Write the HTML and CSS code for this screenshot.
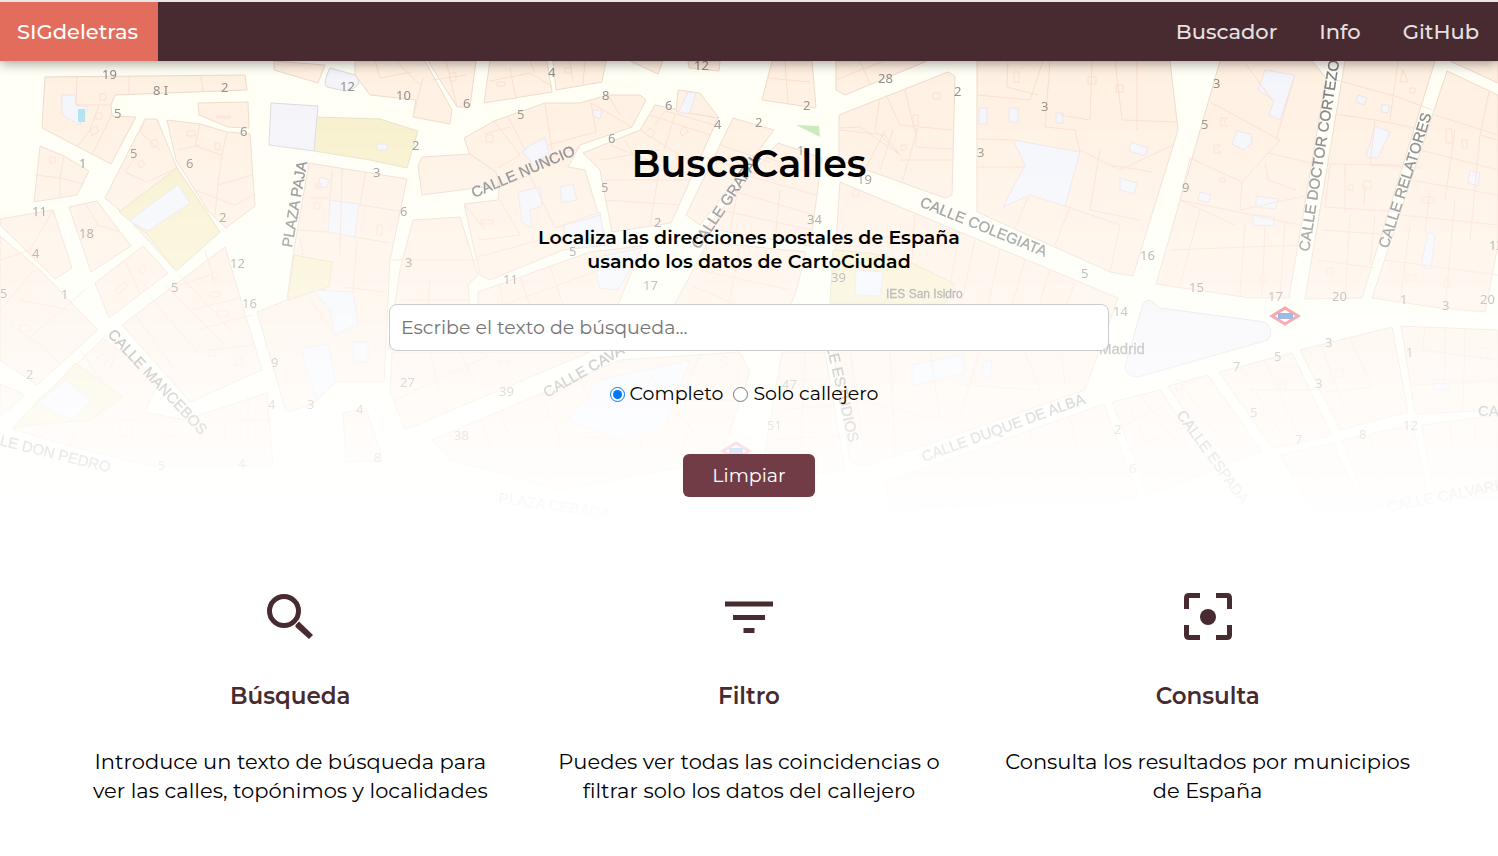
FILE: index.html
```html
<!DOCTYPE html>
<html lang="es">
<head>
<meta charset="utf-8">
<meta name="viewport" content="width=device-width, initial-scale=1">
<title>BuscaCalles</title>
<link rel="stylesheet" href="styles.css">
</head>
<body>
<header class="navbar">
  <a class="brand" href="#">SIGdeletras</a>
  <nav class="menu">
    <a href="#buscador">Buscador</a>
    <a href="#info">Info</a>
    <a href="#github">GitHub</a>
  </nav>
</header>
<main>
  <section class="hero" id="buscador">
    <svg class="map" viewBox="0 61 1498 472" preserveAspectRatio="xMidYMin slice" aria-hidden="true">
      <rect class="road" x="0" y="61" width="1498" height="480"/>
      <g class="block">
        <path d="M45 77L245 75L247 90L115 95L111 105L112 116L136 117L111 164L42 128Z"/>
        <path d="M198 103L248 102L249 128L228 127L199 115Z"/>
        <path d="M167 120L200 124L227 132L250 134L255 206L226 228L208 211L176 160Z"/>
        <path d="M145 119L157 119L177 168L220 232L176 271L127 217L105 198Z"/>
        <path d="M40 146L64 156L89 171L77 195L34 202Z"/>
        <path d="M69 207L97 201L131 246L91 272Z"/>
        <path d="M0 219L53 210L72 268L55 279L0 225Z"/>
        <path d="M143 246L168 273L109 318L95 283Z"/>
        <path d="M225 247L262 370L190 402L122 325Z"/>
        <path d="M0 236L40 270L98 330L37 385L0 360Z"/>
        <path d="M0 384L25 395L0 417Z"/>
        <path d="M103 338L160 380L145 412L185 420L267 393L273 466L150 466L70 446L12 429Z"/>
        <path d="M309 163L407 179L390 260L384 382L336 382L312 405L286 412L257 312L287 300L293 255Z"/>
        <path d="M343 413L366 408L380 450L382 461L346 462Z"/>
        <path d="M274 61L325 65L318 83L274 70Z"/>
        <path d="M355 61L425 61L452 110L450 124L413 117L416 100L370 95L355 75Z"/>
        <path d="M428 61L476 61L470 107L457 107Z"/>
        <path d="M490 61L547 61L552 92L484 103Z"/>
        <path d="M553 61L606 61L602 82L556 90Z"/>
        <path d="M464 138L494 121L545 103L580 103L608 95L640 95L646 100L632 127L580 145L568 167L585 170L600 220L608 245L563 250L490 280L480 275L464 204L498 200L500 180L470 155Z"/>
        <path d="M422 157L470 154L496 172L499 185L422 195L418 166Z"/>
        <path d="M413 220L460 217L478 275L468 285L473 350L388 350L400 270Z"/>
        <path d="M583 153L640 130L655 105L718 118L671 223L612 232L600 170Z"/>
        <path d="M630 61L663 61L658 74ZM678 90L700 93L719 118L676 111Z"/>
        <path d="M688 61L720 61L719 71L689 68Z"/>
        <path d="M733 118L774 130L755 155L700 225L686 215Z"/>
        <path d="M778 143L822 158L810 246L706 228Z"/>
        <path d="M478 292L590 252L642 246L618 305L560 350L478 350Z"/>
        <path d="M708 242L806 252L796 292L772 350L650 350Z"/>
        <path d="M772 61L812 61L816 108L762 100Z"/>
        <path d="M836 61L927 61L845 95L836 90Z"/>
        <path d="M839 115L948 72L955 76L952 195L945 198L839 160Z"/>
        <path d="M840 182L960 232L1118 298L1085 390L865 466L850 462L830 330Z"/>
        <path d="M977 61L1170 61L1178 130L1133 276L1110 272L977 212Z"/>
        <path d="M1220 61L1312 61L1326 78L1289 298L1250 298L1156 284Z"/>
        <path d="M1345 61L1435 61L1362 298L1305 299Z"/>
        <path d="M1447 71L1498 95L1498 245L1485 312L1440 308L1372 298Z"/>
        <path d="M1450 61L1498 61L1498 83Z"/>
        <path d="M1300 350L1392 327L1408 412L1340 430Z"/>
        <path d="M1401 326L1498 330L1498 410L1415 414Z"/>
        <path d="M1219 372L1292 353L1332 435L1272 448Z"/>
        <path d="M1168 386L1208 375L1262 452L1222 466Z"/>
        <path d="M1112 402L1160 390L1215 470L1148 495Z"/>
        <path d="M1280 455L1333 443L1365 510L1310 510Z"/>
        <path d="M1342 440L1412 425L1430 500L1368 510Z"/>
        <path d="M1422 425L1498 415L1498 500L1435 500Z"/>
        <path d="M885 482L1104 404L1140 500L890 510Z"/>
        <path d="M782 352L825 352L845 470L760 480Z"/>
        <path d="M392 352L590 352L405 430L390 392Z"/>
        <path d="M432 440L620 360L740 352L750 372L720 460L560 490L450 460Z"/>
      </g>
      <g class="park">
        <path d="M315 117L380 119L418 131L407 168L370 160L314 151Z"/>
        <path d="M177 168L220 232L176 271L147 234L119 212Z"/>
        <path d="M294 255L332 262L329 287L288 300Z"/>
        <path d="M75 363L123 397L90 420L30 425L12 429L35 403L60 380Z"/>
        <path d="M833 250L870 253L910 262L955 284L945 303L830 303Z"/>
      </g>
      <g class="plaza">
        <path d="M271 103L318 106L314 151L269 145Z"/>
        <path d="M330 68L355 75Q366 86 345 91L327 87Q322 84 330 68Z"/>
        <path d="M1150 300L1160 308L1265 322Q1275 330 1268 340L1138 377Q1124 376 1125 366L1143 304Q1146 299 1150 300Z"/>
      </g>
      <g class="yard">
        <path d="M62 95L76 95L76 105L88 107L80 125L62 115Z"/>
        <path d="M178 184L190 203L148 231L129 221Z"/>
        <path d="M330 200L359 204L355 237L328 232Z"/>
        <path d="M313 290L353 292L358 324L335 335L330 310Z"/>
        <path d="M301 348L328 344L336 382L316 400Z"/>
        <path d="M353 342L368 342L368 362L353 362Z"/>
        <path d="M65 380L92 400L72 420L38 403Z"/>
        <path d="M532 144L545 138L549 152L535 166L522 152Z"/>
        <path d="M518 192L540 187L542 206L530 210L532 228L522 222Z"/>
        <path d="M560 187L573 184L577 200L562 203Z"/>
        <path d="M563 225L600 212L605 244L570 249Z"/>
        <path d="M593 110L602 110L600 119L593 116Z"/>
        <path d="M688 92L696 93L690 113L678 113Z"/>
        <path d="M592 258L642 248L618 290L600 288Z"/>
        <path d="M320 177L330 180L326 188L318 186Z"/>
        <path d="M377 144L387 144L387 150L377 150Z"/>
        <path d="M856 270L883 272L880 296L855 295Z"/>
        <path d="M1013 140L1080 152L1065 206L1030 195L1003 207L1025 165Z"/>
        <path d="M979 108L987 108L987 124L979 124ZM1009 108L1018 108L1018 122L1009 122ZM1056 113L1063 113L1063 123L1056 123Z"/>
        <path d="M1265 70L1295 75L1280 120L1269 115L1274 100L1258 90Z"/>
        <path d="M1237 131L1251 134L1252 144L1243 150L1232 144Z"/>
        <path d="M1256 196L1278 199L1276 209L1256 207ZM1253 215L1274 217L1274 226L1253 225Z"/>
        <path d="M1375 126L1390 132L1378 158L1366 157ZM1131 142L1148 148L1145 156L1129 151ZM1120 178L1137 183L1134 194L1120 190Z"/>
        <path d="M1200 192L1211 195L1208 203L1198 200ZM1358 95L1367 98L1364 105L1356 102ZM1382 104L1390 106L1388 113L1381 112ZM1470 170L1480 173L1478 186L1468 183Z"/>
        <path d="M1428 232L1435 235L1431 269L1421 266ZM1434 380L1449 380L1449 390L1434 390Z"/>
        <path d="M568 420L600 380L690 360L665 425L620 440Z"/>
        <path d="M912 365L963 354L964 374L912 386ZM983 362L992 360L990 378L982 378Z"/>
      </g>
      <rect class="pool" x="78" y="109" width="7" height="13"/>
      <path class="lawn" d="M796 125L819 126L820 137Z"/>
      <path class="parcel" d="M77 77L76 105L110 105M129 77L129 94M201 76L203 91M99 105L90 130L77 147M111 116L92 155M136 117L120 145M64 156L60 178L35 175M60 178L60 198M60 178L84 184M145 119L140 132L160 150M134 158L125 172L147 182L177 168M200 124L195 146L222 155L227 132M222 155L218 185L253 175M178 150L200 145M195 190L235 205L255 194M218 185L215 215M85 203L98 225L80 240M98 225L120 232M0 260L30 250L53 210M20 300L70 310M0 310L34 270M30 337L85 290M10 325L40 345L62 365M126 263L140 295M135 315L175 370M150 297L200 355M165 285L225 345M180 275L235 335M190 310L240 298M200 329L252 315M207 350L255 345M180 285L210 275M205 250L215 285M120 335L110 370M80 350L103 382M70 446L75 430L110 405M200 420L200 466M225 420L225 466M248 395L248 466M237 420L270 420M332 172L330 198L309 198M366 171L360 205L406 212M328 232L297 230M355 237L390 243M300 237L303 255M342 168L340 255M357 240L353 292M383 292L345 287M310 300L335 335M375 61L380 78L412 72M396 61L420 85M413 117L423 78M432 80L466 75M446 61L457 107M510 68L516 100M490 81L530 73L552 86M530 61L535 73M570 61L573 82M585 61L583 84M494 121L520 155L498 168M484 134L510 127M508 117L525 150M545 103L552 150M548 145L596 132L591 103M591 103L632 127M608 95L620 115M530 175L555 228L600 215M535 162L580 148M498 188L530 175M500 200L520 235L479 240M464 204L485 230M478 257L540 240M390 260L478 260M402 300L470 300M430 278L425 350M610 145L660 165L650 225M600 160L660 150M605 180L690 180M604 200L680 205M640 130L695 165M650 115L710 135M655 125L665 111L715 125M625 140L635 158M675 115L664 150M700 155L775 180M720 145L770 162M760 155L815 175M745 175L816 195M730 190L814 215M720 210L812 230M740 180L730 230M780 190L775 240M700 270L790 290M740 246L720 350M690 285L785 325M500 285L510 350M520 277L545 350M550 267L575 340M490 310L600 270M768 78L810 82M785 61L788 103M836 80L860 70L885 61M860 61L870 84M840 130L885 135L900 155L875 130L880 98M886 95L900 125L952 130M905 90L915 132M916 128L916 147L952 149M840 128L860 127L900 155M893 130L880 170M918 128L902 182M862 175L885 131M952 160L900 160M977 95L1030 100L1043 61M1008 61L1007 87L1038 95M977 139L1013 140M977 167L1025 167M1050 61L1045 127L1075 130L1080 152M1092 61L1090 120M1115 61L1122 120L1177 122M1137 61L1137 130M1090 120L1060 115M1080 150L1120 170L1173 145M1065 206L1120 225M1028 197L1015 228M1100 150L1090 210L1140 220M1110 165L1152 172M1120 225L1110 272M1070 207L1055 245M840 240L960 232M915 215L912 260M960 232L950 285M975 240L960 310M1000 250L985 320M1025 260L1005 330M1050 270L1030 335M1075 282L1050 350M945 305L1112 315M850 350L865 460M890 350L895 455M930 350L940 420L860 400M980 350L960 415M1020 340L1040 390L960 385M1060 330L1065 385M1210 102L1280 140L1242 182L1190 158M1245 63L1272 100M1276 140L1295 75M1242 182L1240 210L1309 195M1190 158L1180 200L1300 225M1180 200L1235 225M1268 153L1320 165M1265 162L1268 180L1296 190M1245 225L1240 295M1265 226L1262 298M1285 222L1280 298M1200 210L1180 285M1170 250L1300 245M1336 80L1398 97L1432 110M1335 114L1375 120L1425 130M1398 61L1390 120M1375 120L1370 165L1420 168M1328 164L1410 165M1330 164L1325 207L1400 212M1345 164L1345 212M1365 185L1364 205M1322 230L1395 235M1350 215L1345 298M1375 215L1370 265M1318 260L1375 268M1489 92L1480 135L1498 140M1435 115L1498 135M1420 150L1498 170M1410 180L1498 195M1400 215L1498 225M1385 260L1498 275M1455 130L1445 200M1480 135L1470 240M1455 200L1445 308M1410 225L1400 302M1430 190L1425 232M1321 345L1345 410M1350 338L1372 387L1325 392M1240 367L1285 440M1265 361L1300 440M1245 390L1320 390M1425 328L1422 350L1498 360M1445 328L1445 385M1465 330L1463 412M1415 385L1498 380M1180 382L1235 462M1125 400L1170 490M1140 395L1200 475M1115 430L1165 405M1125 450L1190 425M910 475L920 510M950 460L960 510M990 446L1000 510M1030 431L1045 510M1070 417L1090 505M1300 450L1335 510M1370 435L1385 505M1450 422L1455 500M1475 420L1475 500M790 380L830 380M780 410L835 405M770 440L840 435M805 352L800 470M430 352L440 395M460 352L475 385M395 400L490 355M500 412L515 450M540 395L560 435L620 440M580 380L590 400M650 375L700 440M700 355L680 400L740 400M480 420L500 470M560 435L550 488M640 440L645 475M690 420L680 465"/>
      <path class="parcel" d="M100 94h6v6h-6zM96 113h6v6h-6zM90 130l6-4 3 5-7 5zM50 157h5v6h-5zM137 163l5-3 3 5-5 3zM150 142l6-3 3 6-6 3zM187 131h8v5h-8zM215 143h5v7h-5zM217 116h13v2h-13zM314 203h6v6h-6zM316 183h5v5h-5zM450 73h6v8h-6zM497 82h8v4h-8zM565 68h6v5h-6zM645 133l5-5 5 5-5 5zM680 131l5-4 3 5-6 4zM486 135h7v7h-7zM481 220h12v4h-12zM377 225h5v10h-5zM933 93h7v6h-7zM913 115h5v10h-5zM901 145h5v5h-5zM853 190h6v6h-6zM860 238h5v5h-5zM1014 72h5v10h-5zM1088 77h8v7h-8zM1116 85h7v7h-7zM1221 118h7l-4 4 4 4h-7zM1214 145h7l-4 4 4 4h-7zM1403 70l5 12h-8zM1410 88h5v5h-5zM1446 129h6v14h-6zM1462 140h5v8h-5zM1220 178h5v4h-5zM1363 181h8v8h-8zM1348 185h5v5h-5zM1422 197h12v6h-12zM1327 268h6v6h-6zM1406 275h10v6h-10zM1444 280h6v7h-6zM1260 276h6v7h-6zM1176 380h6v10h-6zM1280 381h6v8h-6zM1335 369h8v8h-8zM1480 348h8v10h-8zM115 290l10-8 3 4-10 8zM138 270l5-5 4 4-5 5zM20 325h10v6h-10zM97 358l6-4 6 6-6 4zM120 420h12v16h-12zM163 436h12v12h-12zM210 292h10v5h-10zM218 311h10v5h-10zM212 272h6v6h-6zM235 358h7v7h-7zM208 350h8v6h-8zM460 340h8v8h-8zM500 358h8v5h-8zM720 360l5-4 5 5-5 4z"/>
      <g class="street">
        <text transform="translate(292 248) rotate(-80)">PLAZA PAJA</text>
        <text transform="translate(474 198) rotate(-23)">CALLE NUNCIO</text>
        <text transform="translate(699 250) rotate(-56)">CALLE GRAFAL</text>
        <text transform="translate(919 206) rotate(22)">CALLE COLEGIATA</text>
        <text transform="translate(1309 252) rotate(-81)">CALLE DOCTOR CORTEZO</text>
        <text transform="translate(1388 249) rotate(-72)">CALLE RELATORES</text>
        <text transform="translate(107 335) rotate(47)">CALLE MANCEBOS</text>
        <text transform="translate(-9 443) rotate(14)">LLE DON PEDRO</text>
        <text transform="translate(547 398) rotate(-30)">CALLE CAVA BAJA</text>
        <text transform="translate(820 318) rotate(77)">CALLE ESTUDIOS</text>
        <text transform="translate(924 462) rotate(-20)">CALLE DUQUE DE ALBA</text>
        <text transform="translate(1176 415) rotate(54)">CALLE ESPADA</text>
        <text transform="translate(1388 512) rotate(-11)">CALLE CALVARIO</text>
        <text transform="translate(498 503) rotate(8)">PLAZA CEBADA</text>
        <text x="1478" y="416">CA</text>
        <text class="place" x="886" y="298">IES San Isidro</text>
        <text x="1099" y="354">Madrid</text>
      </g>
      <g class="number">
        <text x="102" y="79">19</text><text x="153" y="95">8 I</text><text x="221" y="92">2</text><text x="114" y="118">5</text><text x="240" y="136">6</text><text x="130" y="158">5</text><text x="79" y="168">1</text><text x="186" y="168">6</text><text x="219" y="222">2</text><text x="32" y="216">11</text><text x="79" y="238">18</text><text x="32" y="258">4</text><text x="340" y="91">12</text><text x="396" y="100">10</text><text x="463" y="108">6</text><text x="548" y="77">4</text><text x="517" y="119">5</text><text x="602" y="100">8</text><text x="694" y="70">12</text><text x="665" y="110">6</text><text x="714" y="129">4</text><text x="412" y="150">2</text><text x="373" y="177">3</text><text x="608" y="143">6</text><text x="601" y="192">5</text><text x="400" y="216">6</text><text x="654" y="227">2</text><text x="405" y="267">3</text><text x="569" y="256">5</text><text x="503" y="284">11</text><text x="643" y="290">17</text><text x="878" y="83">28</text><text x="803" y="110">2</text><text x="755" y="127">2</text><text x="954" y="96">2</text><text x="797" y="155">1</text><text x="857" y="184">19</text><text x="807" y="224">34</text><text x="831" y="282">39</text><text x="1041" y="111">3</text><text x="977" y="157">3</text><text x="1081" y="278">5</text><text x="1213" y="88">3</text><text x="1201" y="129">5</text><text x="1182" y="192">9</text><text x="1140" y="260">16</text><text x="1489" y="250">12</text><text x="230" y="268">12</text><text x="242" y="308">16</text><text x="171" y="292">5</text><text x="61" y="299">1</text><text x="0" y="298">5</text><text x="26" y="379">2</text><text x="271" y="367">9</text><text x="268" y="409">4</text><text x="307" y="409">3</text><text x="356" y="414">4</text><text x="158" y="470">5</text><text x="238" y="468">4</text><text x="374" y="462">8</text><text x="400" y="387">27</text><text x="499" y="396">39</text><text x="454" y="440">38</text><text x="782" y="389">47</text><text x="767" y="430">51</text><text x="1113" y="316">14</text><text x="1189" y="292">15</text><text x="1268" y="301">17</text><text x="1332" y="301">20</text><text x="1400" y="304">1</text><text x="1442" y="310">3</text><text x="1480" y="304">20</text><text x="1325" y="347">3</text><text x="1274" y="361">5</text><text x="1233" y="371">7</text><text x="1406" y="357">1</text><text x="1315" y="388">3</text><text x="1250" y="417">5</text><text x="1114" y="434">2</text><text x="1295" y="444">7</text><text x="1359" y="439">8</text><text x="1403" y="430">12</text><text x="1129" y="473">6</text>
      </g>
      <g class="metro">
        <path d="M1272 316L1285 308L1298 316L1285 324Z"/><rect x="1278" y="313" width="15" height="6"/>
        <path d="M723 451L736 443L749 451L736 459Z"/><rect x="729" y="448" width="14" height="6"/>
      </g>
    </svg>
    <form class="search">
      <h1>BuscaCalles</h1>
      <h2>Localiza las direcciones postales de España<br>usando los datos de CartoCiudad</h2>
      <input class="query" type="text" aria-label="Texto de búsqueda" placeholder="Escribe el texto de búsqueda...">
      <div class="options">
        <label><input type="radio" name="tipo" checked>Completo</label>
        <label><input type="radio" name="tipo">Solo callejero</label>
      </div>
      <button class="clear" type="button">Limpiar</button>
    </form>
  </section>
  <section class="features" id="info">
    <article>
      <svg class="icon" viewBox="0 0 56 56" aria-hidden="true"><circle cx="22" cy="22" r="14.500" fill="none" stroke="currentColor" stroke-width="5"/><path d="M33.500 36L37 32.500L51 46L47 50L33.500 38Z"/></svg>
      <h3>Búsqueda</h3>
      <p>Introduce un texto de búsqueda para<br>ver las calles, topónimos y localidades</p>
    </article>
    <article>
      <svg class="icon" viewBox="0 0 56 56" aria-hidden="true"><path d="M4 12.500h48v5H4zM12 26h32v5H12zM22.500 39h11v5h-11z"/></svg>
      <h3>Filtro</h3>
      <p>Puedes ver todas las coincidencias o<br>filtrar solo los datos del callejero</p>
    </article>
    <article>
      <svg class="icon" viewBox="0 0 56 56" aria-hidden="true"><path d="M4 20V9Q4 4 9 4H20V9H9V20ZM36 4H47Q52 4 52 9V20H47V9H36ZM52 36V46Q52 51 47 51H36V46H47V36ZM20 51H9Q4 51 4 46V36H9V46H20Z"/><circle cx="28" cy="28" r="8"/></svg>
      <h3>Consulta</h3>
      <p>Consulta los resultados por municipios<br>de España</p>
    </article>
  </section>
</main>
</body>
</html>
```
FILE: styles.css
```css
* {
  box-sizing: border-box;
}

body {
  margin: 0;
  border-top: 2px solid #e8e6e8;
  background: #fff;
  color: #000;
  font-family: Montserrat, Inter, "Open Sans", sans-serif;
  font-size: 19px;
}

.navbar {
  position: relative;
  z-index: 1;
  display: flex;
  justify-content: space-between;
  background: #472b30;
  box-shadow: 0 2px 12px rgba(0, 0, 0, 0.4);
  font-size: 21px;
  font-weight: 500;
  line-height: 59px;
}

.navbar a {
  color: #e6e0e0;
  text-decoration: none;
}

.navbar .brand {
  padding: 0 20px 0 17px;
  background: #e26d5c;
  color: #fff;
}

.menu {
  display: flex;
  gap: 42px;
  padding-right: 19px;
}

.hero {
  position: relative;
  display: flex;
  justify-content: center;
  padding: 80px 20px 36px;
}

.map {
  position: absolute;
  inset: 0;
  width: 100%;
  height: 100%;
  mask-image: linear-gradient(#000, transparent 98%);
}

.road {
  fill: #fffff5;
}

.block {
  fill: #fff0e1;
  stroke: #ecd8c8;
}

.park {
  fill: #f7efc8;
  stroke: #e6dfbc;
}

.plaza {
  fill: #f3f3f9;
  stroke: #d8d6da;
}

.yard {
  fill: #f3f5fb;
  stroke: #ece2e4;
}

.pool {
  fill: #a9dff2;
}

.lawn {
  fill: #c3e8b2;
}

.parcel {
  fill: none;
  stroke: #fbdccd;
}

.street {
  fill: #77777b;
  stroke: #77777b;
  stroke-width: 0.3px;
  font: 15px "Liberation Sans", sans-serif;
}

.street .place {
  font-size: 12px;
}

.number {
  fill: #8d8984;
  font: 13px "Noto Sans", sans-serif;
}

.metro path {
  fill: #fff;
  stroke: #ee4050;
  stroke-width: 3px;
}

.metro rect {
  fill: #2868c0;
}

.search {
  position: relative;
  display: flex;
  flex-direction: column;
  align-items: center;
  width: 100%;
  max-width: 720px;
}

h1,
h2,
h3,
p {
  margin: 0;
  text-align: center;
}

h1 {
  margin-bottom: 40px;
  font-size: 38px;
  font-weight: 600;
  line-height: 45px;
}

h2 {
  margin-bottom: 30px;
  font-size: 19px;
  font-weight: 600;
  line-height: 24px;
}

.query {
  width: 100%;
  height: 47px;
  padding: 0 11px;
  border: 1px solid #ccc;
  border-radius: 8px;
  background: #fff;
  font: inherit;
}

.query::placeholder {
  color: #757575;
}

.options {
  display: flex;
  gap: 10px;
  margin: 31px 10px 48px 0;
  line-height: 24px;
}

.options label {
  display: flex;
  align-items: center;
  gap: 5px;
}

.options input {
  width: 15px;
  height: 15px;
  margin: 0;
}

.clear {
  width: 132px;
  height: 43px;
  border: 0;
  border-radius: 6px;
  background: #723c47;
  color: #fff;
  font: inherit;
}

.features {
  display: grid;
  grid-template-columns: repeat(3, 1fr);
  padding: 56px 61px 50px;
  font-size: 21px;
  line-height: 29px;
}

.features article {
  display: flex;
  flex-direction: column;
  align-items: center;
}

.icon {
  width: 56px;
  height: 56px;
  margin-bottom: 37px;
  color: #472b30;
  fill: currentColor;
}

h3 {
  margin-bottom: 36px;
  color: #472b30;
  font-size: 23px;
  font-weight: 600;
}
```
